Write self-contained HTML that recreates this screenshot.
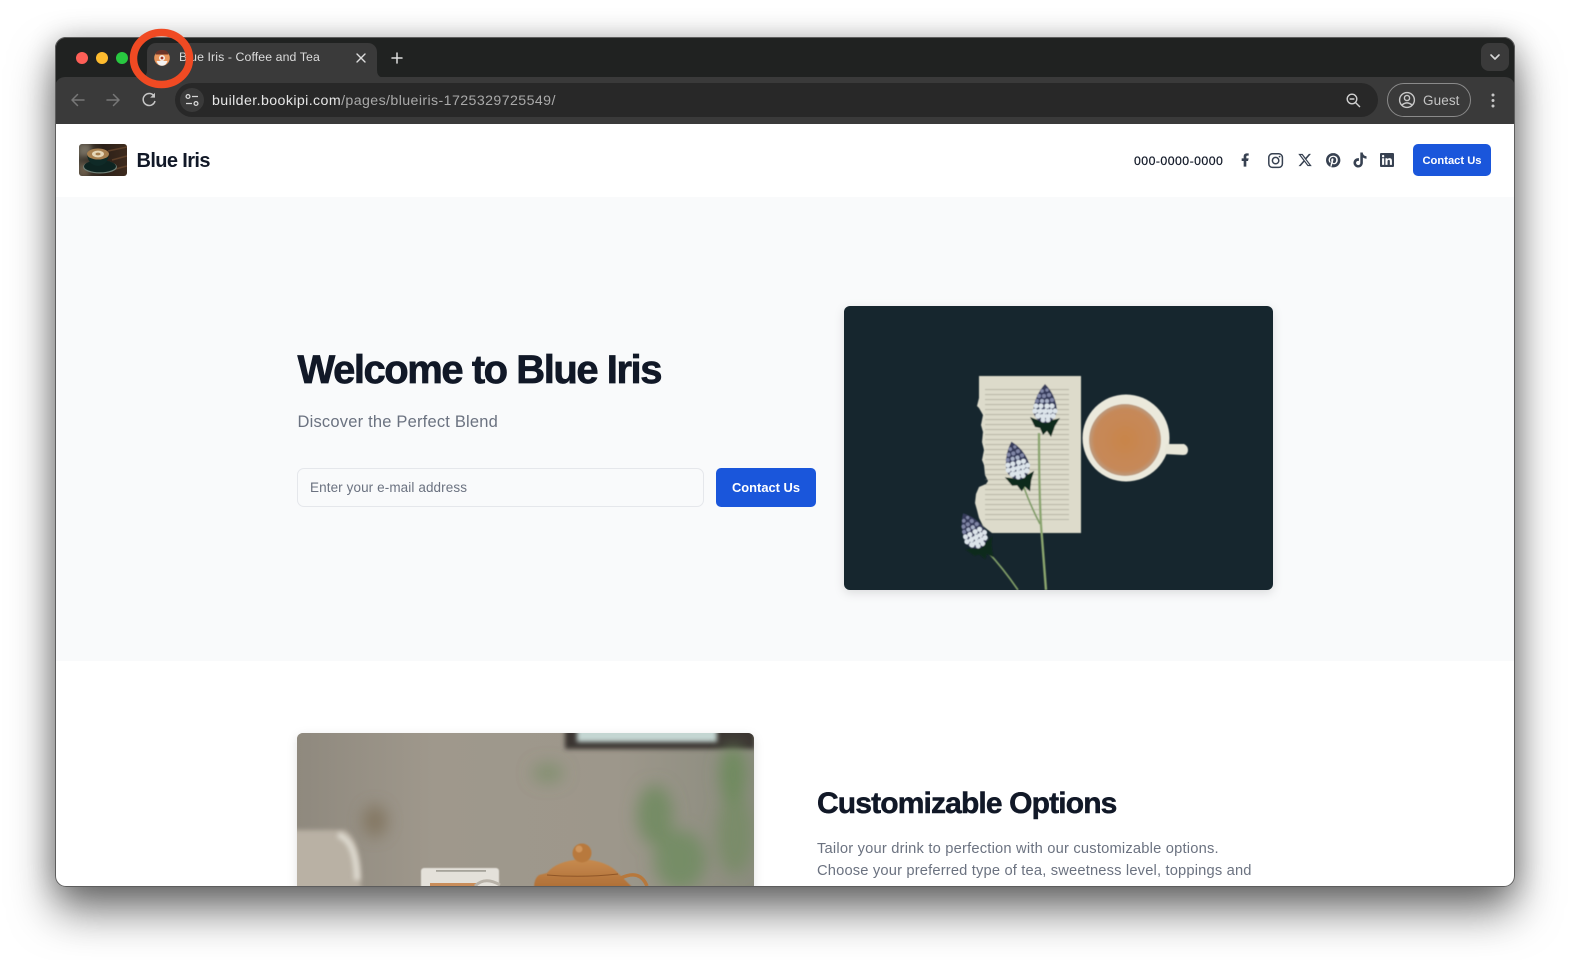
<!DOCTYPE html>
<html lang="en"><head><meta charset="utf-8"><title>Blue Iris - Coffee and Tea</title>
<style>
html,body{margin:0;padding:0;width:1571px;height:960px;overflow:hidden;background:#fff;font-family:"Liberation Sans",sans-serif}
.a{position:absolute;white-space:nowrap}
#win{position:absolute;left:55px;top:37px;width:1460px;height:850px;border-radius:11px;background:#fff;box-shadow:0 24px 44px rgba(0,0,0,.54),0 2px 28px rgba(0,0,0,.24);}
#clip{position:absolute;left:55px;top:37px;width:1460px;height:850px;border-radius:11px;overflow:hidden}
#bord{position:absolute;left:55px;top:37px;width:1458px;height:848px;border-radius:11px;border:1px solid #5d5d5d;pointer-events:none}
svg{position:absolute;left:0;top:0;overflow:visible}
</style></head><body>
<div id="win"></div>
<div id="clip">
  <div style="position:absolute;left:-55px;top:-37px;width:1571px;height:960px">
    <div class="a" style="left:55px;top:37px;width:1460px;height:60px;background:#202221"></div>
    <div class="a" style="left:55px;top:77px;width:1460px;height:47px;background:#3a3a3a;border-radius:10px 10px 0 0"></div>
    <div class="a" style="left:147px;top:43px;width:230px;height:35px;background:#3a3a3a;border-radius:9px 9px 0 0"></div>
    <div class="a" style="left:175px;top:83px;width:1203px;height:34px;background:#282828;border-radius:17px"></div>
    <div class="a" style="left:180px;top:88px;width:24px;height:24px;background:#3a3a3a;border-radius:12px"></div>
    <div class="a" style="left:1387px;top:83px;width:82px;height:32px;border:1px solid #8a8a8a;border-radius:17px"></div>
    <div class="a" style="left:1481px;top:43px;width:28px;height:28px;background:#3a3a3a;border-radius:8px"></div>
    <div class="a" style="left:179px;top:50px;font-size:12.3px;line-height:15px;color:#dcdcdc;letter-spacing:.1px">Blue Iris - Coffee and Tea</div>
    <div class="a" style="left:212px;top:93px;font-size:14.2px;line-height:17px;color:#a9a9a9;letter-spacing:.4px"><span style="color:#e6e6e6">builder.bookipi.com</span>/pages/blueiris-1725329725549/</div>
    <div class="a" style="left:1423px;top:92px;font-size:13.5px;line-height:17px;color:#c4c4c4;letter-spacing:.1px">Guest</div>

    <!-- page -->
    <div class="a" style="left:55px;top:124px;width:1460px;height:73px;background:#fff"></div>
    <div class="a" style="left:55px;top:197px;width:1460px;height:464px;background:#f9fafb"></div>
    <div class="a" style="left:136.5px;top:149px;font-size:20px;line-height:24px;font-weight:bold;color:#111827;letter-spacing:-.62px">Blue Iris</div>
    <div class="a" style="left:1134px;top:153.5px;font-size:12.3px;line-height:15px;color:#111827;letter-spacing:.45px;-webkit-text-stroke:.2px #111827">000-0000-0000</div>
    <div class="a" style="left:1413px;top:144px;width:78px;height:32px;background:#1a56db;border-radius:5px;color:#fff;font-size:11.2px;font-weight:bold;line-height:34px;text-align:center">Contact Us</div>

    <div class="a" style="left:297.5px;top:346px;font-size:40px;line-height:48px;font-weight:bold;color:#111827;letter-spacing:-1.46px;-webkit-text-stroke:.7px #111827">Welcome to Blue Iris</div>
    <div class="a" style="left:297.5px;top:412px;font-size:16.5px;line-height:20px;color:#6b7280;letter-spacing:.2px">Discover the Perfect Blend</div>
    <div class="a" style="left:297px;top:468px;width:405px;height:37px;background:#f9fafb;border:1px solid #e5e7eb;border-radius:7px"></div>
    <div class="a" style="left:310px;top:479px;font-size:13.5px;line-height:17px;color:#6b7280;letter-spacing:.1px">Enter your e-mail address</div>
    <div class="a" style="left:716px;top:468px;width:100px;height:39px;background:#1a56db;border-radius:5px;color:#fff;font-size:12.9px;font-weight:bold;line-height:39px;text-align:center">Contact Us</div>

    <div class="a" style="left:817px;top:786px;font-size:30px;line-height:36px;font-weight:bold;color:#111827;letter-spacing:-.86px;-webkit-text-stroke:.5px #111827">Customizable Options</div>
    <div class="a" style="left:817px;top:840px;font-size:14.7px;line-height:18px;color:#6b7280;letter-spacing:.2px">Tailor your drink to perfection with our customizable options.</div>
    <div class="a" style="left:817px;top:862px;font-size:14.7px;line-height:18px;color:#6b7280;letter-spacing:.17px">Choose your preferred type of tea, sweetness level, toppings and</div>

    <svg width="1571" height="960" viewBox="0 0 1571 960" xmlns="http://www.w3.org/2000/svg">
      <defs>
        <filter id="b1" x="-30%" y="-30%" width="160%" height="160%"><feGaussianBlur stdDeviation=".4"/></filter>
        <filter id="b2" x="-80%" y="-80%" width="260%" height="260%"><feGaussianBlur stdDeviation="8"/></filter>
        <filter id="b3" x="-50%" y="-50%" width="200%" height="200%"><feGaussianBlur stdDeviation="2.5"/></filter>
        <filter id="sh" x="-10%" y="-10%" width="120%" height="120%"><feDropShadow dx="0" dy="3" stdDeviation="5" flood-color="#000" flood-opacity=".12"/></filter>
        <clipPath id="c1"><rect x="844" y="306" width="429" height="284" rx="6"/></clipPath>
        <clipPath id="c2"><rect x="297" y="733" width="457" height="160" rx="6"/></clipPath>
        <clipPath id="c3"><rect x="79" y="144" width="48" height="32" rx="3"/></clipPath>
        <radialGradient id="tea" cx=".5" cy=".5" r=".52"><stop offset="0" stop-color="#c9854a"/><stop offset=".82" stop-color="#c6895a"/><stop offset="1" stop-color="#b9a08a"/></radialGradient>
        <linearGradient id="wall" x1="0" x2="1" y1="0" y2="0"><stop offset="0" stop-color="#8f897e"/><stop offset=".3" stop-color="#9f988c"/><stop offset=".7" stop-color="#9d978b"/><stop offset="1" stop-color="#8b8c7e"/></linearGradient>
        <linearGradient id="wood" x1="0" x2="1" y1="0" y2="0"><stop offset="0" stop-color="#4a443a"/><stop offset=".5" stop-color="#2c2018"/><stop offset="1" stop-color="#3d2a1d"/></linearGradient>
        <linearGradient id="pot" x1="0" x2="0" y1="0" y2="1"><stop offset="0" stop-color="#c78b50"/><stop offset="1" stop-color="#a9682f"/></linearGradient>
        <pattern id="txt" width="100" height="5" patternUnits="userSpaceOnUse" x="984" y="389"><rect x="0" y="0" width="100" height="1.1" fill="#77756b"/></pattern>
        <g id="fl">
          <path d="M-15 14 L-7 17 L-3 14 L3 14 L8 17 L15 15 L10 23 L6 34 L2 28 L-2 32 L-5 25 L-10 24Z" fill="#10291f"/>
          <path d="M0 -19 Q11 -8 12 8 Q9 19 0 20 Q-10 18 -12 8 Q-10 -8 0 -19Z" fill="#343a5a"/>
          <g fill="#8086a6"><circle cx="-3" cy="-12" r="1.8"/><circle cx="2" cy="-13" r="1.6"/><circle cx="-6" cy="-7" r="2"/><circle cx="-1" cy="-7" r="2"/><circle cx="4" cy="-8" r="2"/><circle cx="-8" cy="-2" r="2"/><circle cx="7" cy="-3" r="2"/></g>
          <g fill="#a9b2c8"><circle cx="-3" cy="-2" r="2"/><circle cx="2" cy="-2" r="2"/></g>
          <g fill="#dce4ea"><circle cx="-9" cy="3" r="2.5"/><circle cx="-4" cy="3" r="2.5"/><circle cx="2" cy="3" r="2.6"/><circle cx="7" cy="3" r="2.5"/><circle cx="-10" cy="8" r="2.6"/><circle cx="-5" cy="8" r="2.8"/><circle cx="0" cy="8" r="2.8"/><circle cx="5" cy="8" r="2.8"/><circle cx="10" cy="8" r="2.5"/><circle cx="-7" cy="13" r="2.8"/><circle cx="-2" cy="13" r="3"/><circle cx="3" cy="13" r="3"/><circle cx="8" cy="13" r="2.7"/><circle cx="-2" cy="17" r="2.4"/><circle cx="3" cy="17" r="2.4"/></g>
          <g fill="#3a4060"><circle cx="-6.5" cy="5.5" r=".9"/><circle cx="-1" cy="5.5" r=".9"/><circle cx="4.5" cy="5.5" r=".9"/><circle cx="-3" cy="10.5" r=".8"/><circle cx="2.5" cy="10.5" r=".8"/></g>
        </g>
      </defs>

      <!-- traffic lights -->
      <circle cx="82" cy="58" r="6" fill="#fe5f57"/><circle cx="102" cy="58" r="6" fill="#febc2e"/><circle cx="122" cy="58" r="6" fill="#28c840"/>
      <!-- tab flares -->
      <path d="M139 78 Q147 78 147 70 L147 78Z M377 70 Q377 78 385 78 L377 78Z" fill="#3a3a3a"/>
      <!-- favicon -->
      <circle cx="162" cy="58" r="7.8" fill="#e8955b"/>
      <path d="M155.5 54.5 Q156 50 162 50 Q168 50 168.5 54.5 Z" fill="#6b3428"/>
      <path d="M156.5 61 H167.5 Q166 65.8 162 65.8 Q158 65.8 156.5 61Z" fill="#f2f2f2"/>
      <circle cx="162" cy="58" r="3" fill="#f4eee8"/><circle cx="162" cy="58" r="1.4" fill="#a03a2a"/>
      <!-- tab close, plus -->
      <path d="M357 54 L365 62 M365 54 L357 62" stroke="#dedede" stroke-width="1.4" stroke-linecap="round"/>
      <path d="M397 53 V63 M392 58 H402" stroke="#dedede" stroke-width="1.5" stroke-linecap="round"/>
      <!-- nav -->
      <g fill="none" stroke="#777" stroke-width="1.5" stroke-linecap="round" stroke-linejoin="round">
        <path d="M84 100 H72 M77.5 94.5 L72 100 L77.5 105.5"/>
        <path d="M107 100 H119 M113.5 94.5 L119 100 L113.5 105.5"/>
      </g>
      <path d="M154.4 96.5 A6 6 0 1 0 155 101" fill="none" stroke="#c6c6c6" stroke-width="1.5"/>
      <path d="M155 92.8 V97.6 H150.2Z" fill="#c6c6c6"/>
      <g fill="none" stroke="#d8d8d8" stroke-width="1.3"><circle cx="188" cy="96.5" r="1.9"/><path d="M192 96.5 H198"/><circle cx="196" cy="103.5" r="1.9"/><path d="M186 103.5 H192"/></g>
      <!-- lens -->
      <circle cx="1352" cy="99" r="4.8" fill="none" stroke="#d0d0d0" stroke-width="1.4"/><path d="M1349.6 99 H1354.4 M1355.6 102.6 L1360 107" stroke="#d0d0d0" stroke-width="1.4"/>
      <!-- guest avatar -->
      <circle cx="1407" cy="100" r="7.4" fill="none" stroke="#c8c8c8" stroke-width="1.4"/><circle cx="1407" cy="98" r="2.6" fill="none" stroke="#c8c8c8" stroke-width="1.4"/><path d="M1402 105 Q1407 100.8 1412 105" fill="none" stroke="#c8c8c8" stroke-width="1.4"/>
      <g fill="#c8c8c8"><circle cx="1493" cy="95" r="1.5"/><circle cx="1493" cy="100.5" r="1.5"/><circle cx="1493" cy="106" r="1.5"/></g>
      <path d="M1491 55 L1495 59 L1499 55" fill="none" stroke="#d8d8d8" stroke-width="1.6" stroke-linecap="round" stroke-linejoin="round"/>

      <!-- logo -->
      <g clip-path="url(#c3)">
        <rect x="79" y="144" width="48" height="32" fill="url(#wood)"/>
        <path d="M108 151 L127 147 M112 160 L127 156 M112 170 L127 166" stroke="#6e4b30" stroke-width="1.5" opacity=".7"/>
        <rect x="79" y="144" width="12" height="12" fill="#8a8474" opacity=".7" filter="url(#b3)"/>
        <rect x="79" y="164" width="10" height="12" fill="#7b6a55" opacity=".7" filter="url(#b3)"/>
        <ellipse cx="100" cy="167" rx="17" ry="6.5" fill="#6f7f76"/>
        <ellipse cx="100" cy="166.3" rx="16" ry="6" fill="#0d2421"/>
        <path d="M87 154 Q88 165 98 166 Q108 165 109 154Z" fill="#0f2a27"/>
        <ellipse cx="98" cy="154" rx="11" ry="5.5" fill="#a67f4f"/>
        <ellipse cx="98" cy="154" rx="6" ry="3.4" fill="#e5d7b8"/>
        <ellipse cx="98" cy="154" rx="2.5" ry="1.4" fill="#a67f4f"/>
      </g>

      <!-- social -->
      <g fill="#374151">
        <svg x="1237" y="152" width="16" height="16" viewBox="0 0 24 24"><path d="M14 13.5h2.5l1-4H14v-2c0-1.03 0-2 2-2h1.5V2.14c-.326-.043-1.557-.14-2.857-.14C11.928 2 10 3.657 10 6.7v2.8H7v4h3V22h4v-8.5z"/></svg>
        <g fill="none" stroke="#374151" stroke-width="1.5"><rect x="1268.8" y="153.8" width="13.6" height="13.6" rx="3.6"/><circle cx="1275.6" cy="160.6" r="3.2"/></g><circle cx="1279.6" cy="156.6" r=".9"/>
        <svg x="1297.5" y="152.5" width="15" height="15" viewBox="0 0 24 24"><path d="M18.244 2.25h3.308l-7.227 8.26 8.502 11.24H16.17l-5.214-6.817L4.99 21.75H1.68l7.73-8.835L1.254 2.25H8.08l4.713 6.231zm-1.161 17.52h1.833L7.084 4.126H5.117z"/></svg>
        <svg x="1326" y="153" width="14.4" height="14.4" viewBox="0 0 24 24"><path d="M12.017 0C5.396 0 .029 5.367.029 11.987c0 5.079 3.158 9.417 7.618 11.162-.105-.949-.199-2.403.041-3.439.219-.937 1.406-5.957 1.406-5.957s-.359-.72-.359-1.781c0-1.663.967-2.911 2.168-2.911 1.024 0 1.518.769 1.518 1.688 0 1.029-.653 2.567-.992 3.992-.285 1.193.6 2.165 1.775 2.165 2.128 0 3.768-2.245 3.768-5.487 0-2.861-2.063-4.869-5.008-4.869-3.41 0-5.409 2.562-5.409 5.199 0 1.033.394 2.143.889 2.741.099.12.112.225.085.345-.09.375-.293 1.199-.334 1.363-.053.225-.172.271-.401.165-1.495-.69-2.433-2.878-2.433-4.646 0-3.776 2.748-7.252 7.92-7.252 4.158 0 7.392 2.967 7.392 6.923 0 4.135-2.607 7.462-6.233 7.462-1.214 0-2.354-.629-2.758-1.379l-.749 2.848c-.269 1.045-1.004 2.352-1.498 3.146 1.123.345 2.306.535 3.55.535 6.607 0 11.985-5.365 11.985-11.987C23.97 5.39 18.592.026 11.985.026L12.017 0z"/></svg>
        <svg x="1352.5" y="152.5" width="15" height="15" viewBox="0 0 24 24"><path d="M12.525.02c1.31-.02 2.61-.01 3.91-.02.08 1.53.63 3.09 1.75 4.17 1.12 1.11 2.7 1.62 4.24 1.79v4.03c-1.44-.05-2.89-.35-4.2-.97-.57-.26-1.1-.59-1.62-.93-.01 2.92.01 5.84-.02 8.75-.08 1.4-.54 2.79-1.35 3.94-1.31 1.92-3.58 3.17-5.91 3.21-1.43.08-2.86-.31-4.08-1.03-2.02-1.19-3.44-3.37-3.65-5.71-.02-.5-.03-1-.01-1.49.18-1.9 1.12-3.72 2.58-4.96 1.66-1.44 3.98-2.13 6.15-1.72.02 1.48-.04 2.96-.04 4.44-.99-.32-2.15-.23-3.02.37-.63.41-1.11 1.04-1.36 1.75-.21.51-.15 1.07-.14 1.61.24 1.64 1.82 3.02 3.5 2.87 1.12-.01 2.19-.66 2.77-1.61.19-.33.4-.67.41-1.06.1-1.79.06-3.57.07-5.36.01-4.03-.01-8.05.02-12.07z"/></svg>
        <svg x="1380" y="153" width="14" height="14" viewBox="0 0 24 24"><path d="M20.447 20.452h-3.554v-5.569c0-1.328-.027-3.037-1.852-3.037-1.853 0-2.136 1.445-2.136 2.939v5.667H9.351V9h3.414v1.561h.046c.477-.9 1.637-1.85 3.37-1.85 3.601 0 4.267 2.37 4.267 5.455v6.286zM5.337 7.433c-1.144 0-2.063-.926-2.063-2.065 0-1.138.92-2.063 2.063-2.063 1.14 0 2.064.925 2.064 2.063 0 1.139-.925 2.065-2.064 2.065zm1.782 13.019H3.555V9h3.564v11.452zM22.225 0H1.771C.792 0 0 .774 0 1.729v20.542C0 23.227.792 24 1.771 24h20.451C23.2 24 24 23.227 24 22.271V1.729C24 .774 23.2 0 22.222 0h.003z"/></svg>
      </g>

      <!-- hero image -->
      <rect x="844" y="306" width="429" height="284" rx="6" fill="#16272f" filter="url(#sh)"/>
      <g clip-path="url(#c1)">
        <g filter="url(#b1)">
          <path d="M979 376 L1081 376 L1081 533 L992 533 L988 530 L983 526 L979 518 L977 510 L975 503 L976 494 L979 487 L986 484 L988 481 L985 475 L984 465 L982 460 L984 450 L982 442 L983 432 L981 425 L983 415 L979 408 L977 406 L979 398Z" fill="#dddbcb"/>
          <path d="M985 389 H1069 V520 H985Z" fill="url(#txt)" opacity=".36"/>
          <path d="M1039 433 Q1039 490 1041 525 L1046 590" fill="none" stroke="#8aa56e" stroke-width="2.4"/>
          <path d="M1022 482 Q1030 505 1040 524" fill="none" stroke="#7f9c66" stroke-width="1.7"/>
          <path d="M987 551 Q1003 568 1018 590" fill="none" stroke="#7f9c66" stroke-width="1.7"/>
          <use href="#fl" x="1045" y="403"/>
          <use href="#fl" transform="translate(1016 460) rotate(-14)"/>
          <use href="#fl" transform="translate(972 530) rotate(-28)"/>
          <circle cx="1126" cy="438" r="43.5" fill="#ebe9dc"/>
          <path d="M1166 444 H1184 Q1188 446 1188 450 Q1188 455 1183 455 L1164 454Z" fill="#e8e6d8"/>
          <circle cx="1125" cy="440" r="36" fill="url(#tea)"/>
        </g>
      </g>

      <!-- tea image -->
      <rect x="297" y="733" width="457" height="160" rx="6" fill="#9a9488" filter="url(#sh)"/>
      <g clip-path="url(#c2)">
        <rect x="297" y="733" width="457" height="160" fill="url(#wall)"/>
        <rect x="565" y="725" width="190" height="24" fill="#3a3530" filter="url(#b3)"/>
        <rect x="577" y="725" width="140" height="17" fill="#c4d6d2" filter="url(#b3)"/>
        <g filter="url(#b2)" fill="#6a8a58">
          <ellipse cx="655" cy="815" rx="18" ry="30" opacity=".75"/>
          <ellipse cx="680" cy="860" rx="26" ry="30" opacity=".7"/>
          <ellipse cx="733" cy="775" rx="13" ry="30" opacity=".85"/>
          <ellipse cx="735" cy="835" rx="18" ry="40" opacity=".55"/>
          <ellipse cx="548" cy="773" rx="16" ry="10" opacity=".5"/>
        </g>
        <ellipse cx="375" cy="821" rx="12" ry="16" fill="#7c6d55" opacity=".75" filter="url(#b2)"/>
        <path d="M290 830 H345 Q360 840 361 875 L361 893 H290Z" fill="#b9b1a4" filter="url(#b3)"/>
        <path d="M338 835 Q356 840 357 880" fill="none" stroke="#ddd9cf" stroke-width="6" filter="url(#b3)"/>
        <rect x="421" y="868" width="78" height="30" rx="3" fill="#e4e1da" filter="url(#b1)"/>
        <rect x="436" y="870" width="50" height="1.8" fill="#8d8a80" opacity=".7"/>
        <rect x="430" y="883" width="46" height="4" fill="#c98d5a"/>
        <path d="M475 886 Q485 876 500 885" fill="none" stroke="#b8b2a8" stroke-width="3"/>
        <path d="M535 895 Q532 880 539 875 L547 873 Q556 861 582 859 Q608 861 618 873 L640 895Z" fill="url(#pot)" filter="url(#b1)"/>
        <path d="M547 875 Q582 878 618 874" fill="none" stroke="#8f5527" stroke-width="1"/>
        <path d="M621 878 Q640 869 647 886" fill="none" stroke="#b7783c" stroke-width="3.5"/>
        <circle cx="582" cy="853" r="9.5" fill="#b8793d" filter="url(#b1)"/>
        <circle cx="579" cy="849" r="3.5" fill="#d9a26a" opacity=".7" filter="url(#b1)"/>
      </g>
    </svg>
  </div>
</div>
<div id="bord"></div>
<svg width="1571" height="960" viewBox="0 0 1571 960" xmlns="http://www.w3.org/2000/svg"><ellipse cx="161.5" cy="58.5" rx="28" ry="26" fill="none" stroke="#f04a23" stroke-width="7.5"/></svg>
</body></html>
